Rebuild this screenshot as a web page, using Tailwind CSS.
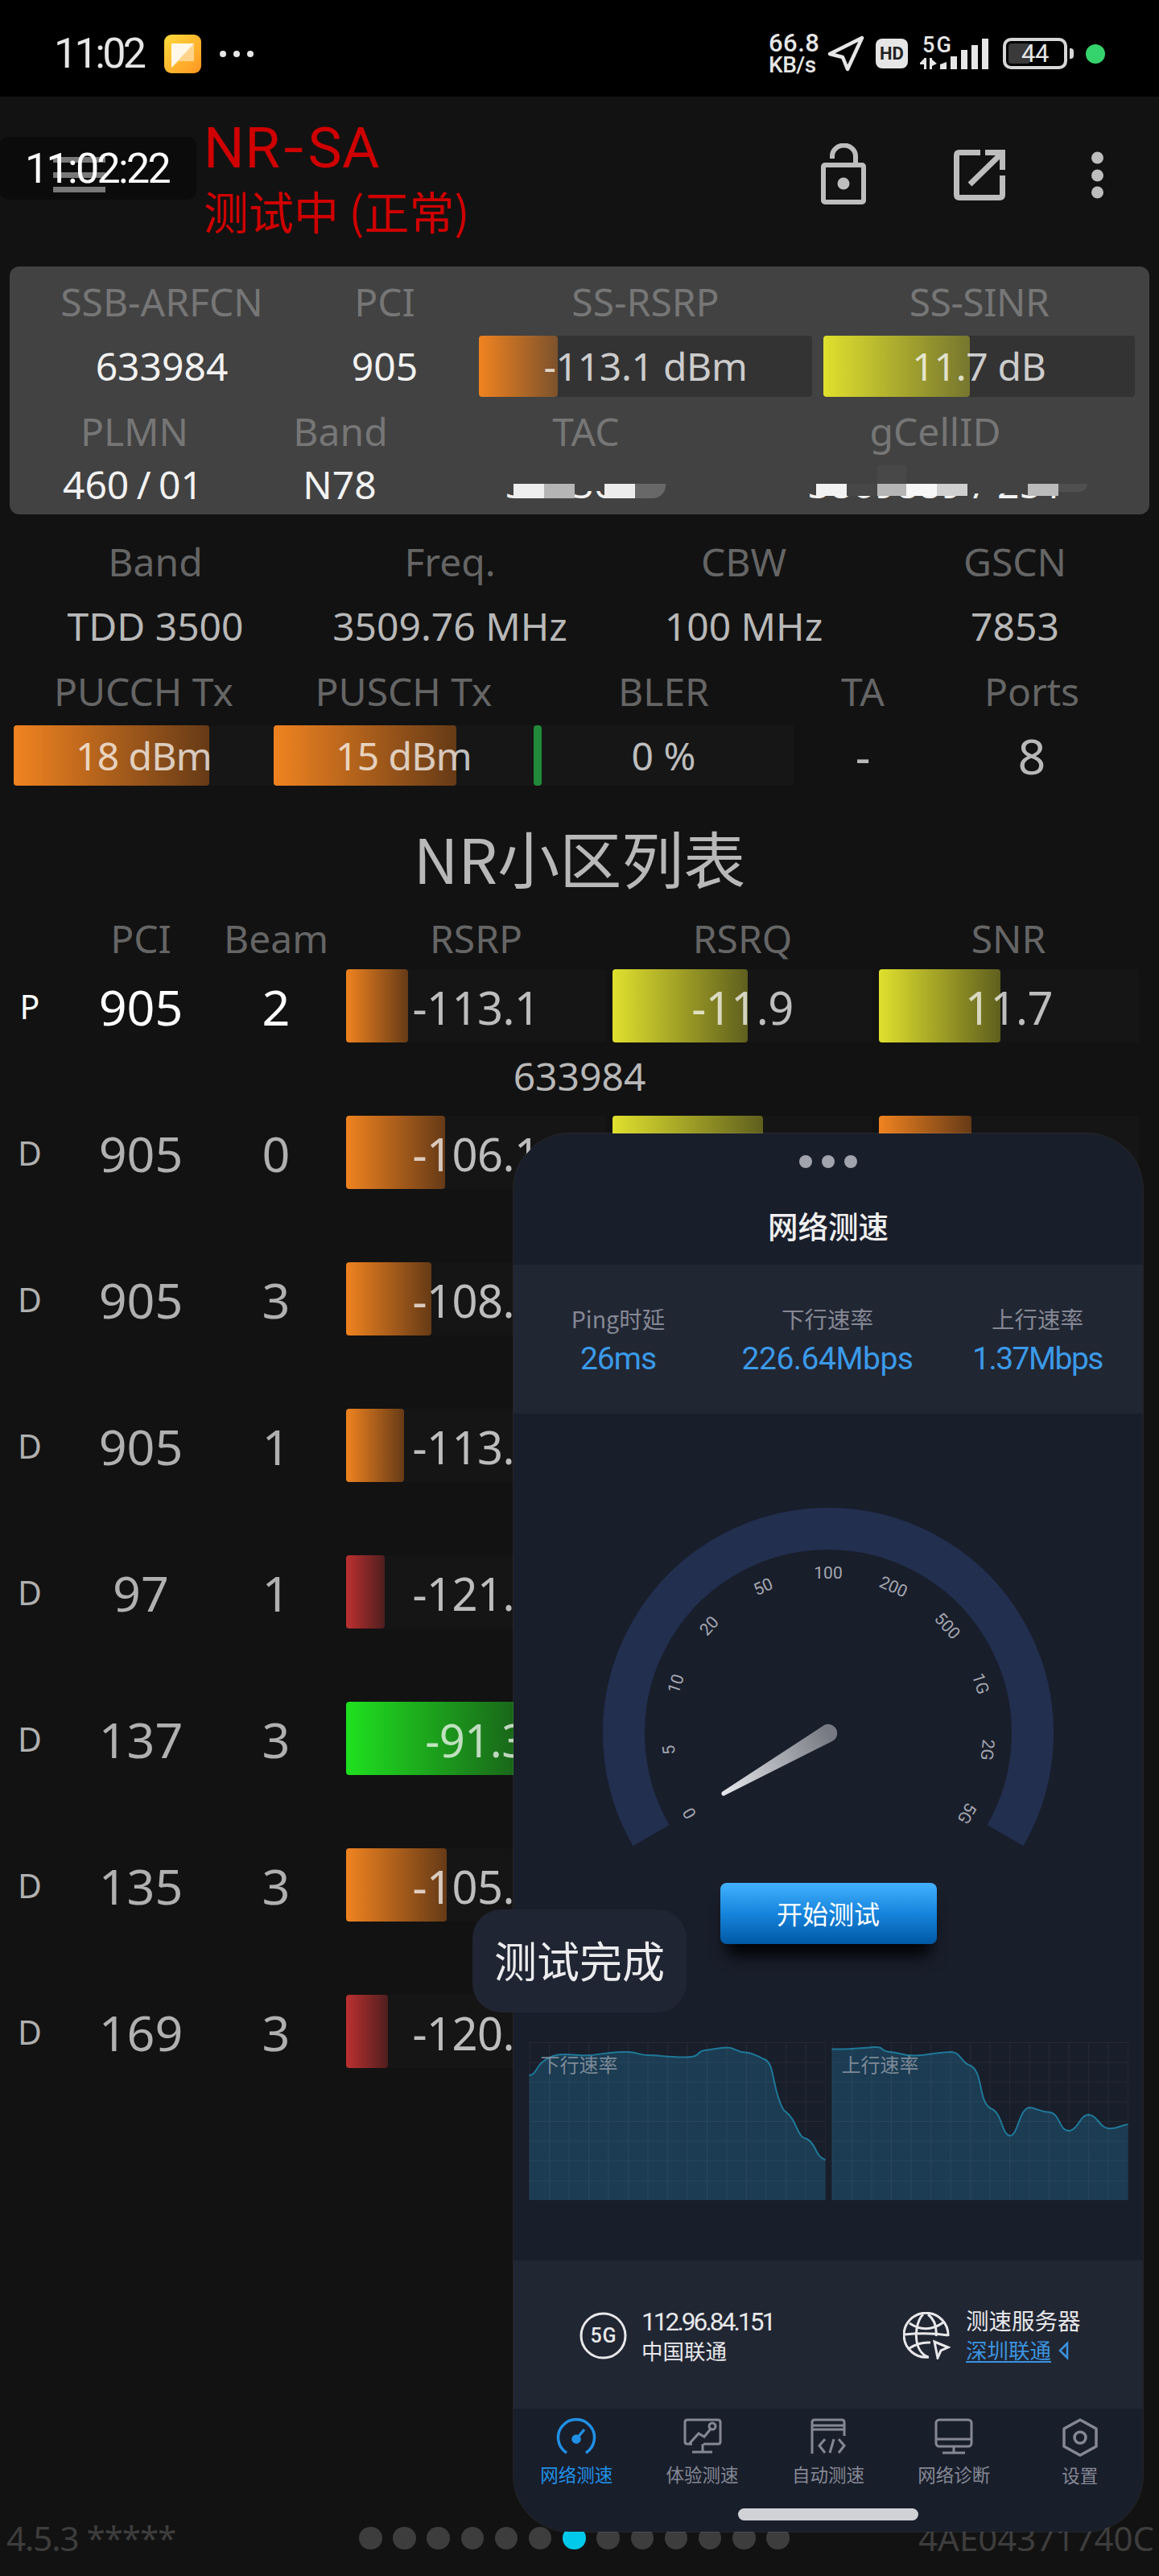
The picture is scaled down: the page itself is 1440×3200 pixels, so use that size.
<!DOCTYPE html>
<html lang="zh-CN">
<head>
  <meta charset="UTF-8">
  <meta name="viewport" content="width=device-width, initial-scale=1.0">
  <title>NR-SA</title>
  <script src="https://cdn.jsdelivr.net/npm/@tailwindcss/browser@4"></script>
</head>
<body class="bg-[#121212]">
  <div class="relative w-[1440px] h-[3200px] overflow-hidden bg-[#121212] flex flex-col font-['Noto_Sans','Noto_Sans_CJK_SC',sans-serif] text-[48px] leading-none text-[#b8b8b8] whitespace-nowrap">

    <!-- Status bar -->
    <div class="h-[120px] shrink-0 bg-black flex items-center pl-[67px] pr-[67px] pt-[13px] font-['Roboto',sans-serif] text-[#e6e6e6]">
      <span class="text-[52px] tracking-[-3.6px] w-[137px]">11:02</span>
      <svg class="w-[46px] h-[48px]" viewBox="0 0 46 48">
        <defs><linearGradient id="app" x1="0" y1="0" x2="1" y2="1"><stop offset="0" stop-color="#ffdb3c"/><stop offset="1" stop-color="#ff9522"/></linearGradient></defs>
        <rect width="46" height="48" rx="9" fill="url(#app)"/>
        <path d="M9 11H37V33H18L9 41Z" fill="#ffd48a"/>
        <path d="M9 11H37L9 41Z" fill="#fff8e8"/>
      </svg>
      <div class="flex gap-[9px] ml-[23px]">
        <i class="size-[8px] rounded-full bg-[#e6e6e6]"></i><i class="size-[8px] rounded-full bg-[#e6e6e6]"></i><i class="size-[8px] rounded-full bg-[#e6e6e6]"></i>
      </div>
      <div class="ml-auto flex items-center">
        <div class="w-[73px] text-[31px] leading-[27px] font-medium text-left"><div class="tracking-[0.5px]">66.8</div><div class="text-[28px] tracking-[-0.5px]">KB/s</div></div>
        <svg class="w-[46px] h-[46px]" viewBox="0 0 46 46" fill="none" stroke="#e6e6e6" stroke-width="4.5" stroke-linejoin="round"><path d="M43 3L3 23L19 27L25 42Z"/></svg>
        <div class="ml-[14px] w-[40px] h-[37px] rounded-[8px] bg-[#e6e6e6] flex items-center justify-center text-[22px] font-bold text-[#222]">HD</div>
        <svg class="ml-[15px] w-[85px] h-[46px]" viewBox="0 0 85 46" fill="#e6e6e6">
          <text x="3" y="21" font-size="27" font-weight="500" textLength="36">5G</text>
          <path d="M5 28V42H8V28ZM0 34L5 29V36H0ZM12 28V42H15V28ZM15 30L21 35L15 38Z"/>
          <path d="M25 42V36L33 33V42ZM38 26H46V42H38ZM51 18H59V42H51ZM64 12H72V42H64ZM77 4H85V42H77Z"/>
        </svg>
        <div class="ml-[18px] relative w-[80px] h-[39px] rounded-[10px] border-[4px] border-[#d6d6d6] flex items-center justify-center text-[31px] text-[#e6e6e6] tracking-[-0.5px]">
          <i class="absolute left-[3px] top-[3px] w-[27px] h-[25px] rounded-[4px] bg-[#3a3a3a]"></i><span class="relative">44</span>
        </div>
        <i class="ml-[3px] w-[5px] h-[13px] rounded-r-[4px] bg-[#d6d6d6]"></i>
        <i class="ml-[15px] size-[24px] rounded-full bg-[#35d36c]"></i>
      </div>
    </div>

    <!-- App bar -->
    <div class="h-[211px] shrink-0 flex pl-[253px] pr-[69px] relative">
      <div class="absolute left-[66px] top-[75px] w-[65px] h-[44px] flex flex-col justify-between">
        <i class="h-[7px] bg-[#b8b8b8]"></i><i class="h-[7px] bg-[#b8b8b8]"></i><i class="h-[7px] bg-[#b8b8b8]"></i>
      </div>
      <div class="absolute left-0 top-[50px] w-[244px] h-[78px] rounded-[10px] bg-black/35 pl-[31px] pt-[2px] flex items-center font-['Roboto',sans-serif] text-[52px] tracking-[-2.700px] text-white">11:02:22</div>
      <div class="text-[#d00000]">
        <div class="mt-[27px] h-[72px] flex items-center text-[71px] tracking-[0.500px] font-['Roboto',sans-serif]">NR<span class="w-[34px] text-center scale-x-125">-</span>SA</div>
        <div class="mt-[12px] h-[60px] flex items-center text-[56px] font-['Noto_Sans_CJK_SC',sans-serif]">测试中 (正常)</div>
      </div>
      <svg class="ml-auto mt-[58px] w-[56px] h-[76px]" viewBox="0 0 56 76" fill="none" stroke="#bdbdbd" stroke-width="6">
        <rect x="3" y="27" width="50" height="46" rx="2"/><path d="M14 19V16A14 13 0 0 1 43 16V27"/><circle cx="28" cy="50" r="7.5" fill="#bdbdbd" stroke="none"/>
      </svg>
      <svg class="ml-[109px] mt-[66px] w-[64px] h-[63px]" viewBox="0 0 64 63" fill="none" stroke="#bdbdbd" stroke-width="7">
        <path d="M33 3.500H7Q3.500 3.500 3.500 7V56Q3.500 59.500 7 59.500H57Q60.500 59.500 60.500 56V32M39 3.500H60.500V25M60 4L20 43"/>
      </svg>
      <svg class="ml-[107px] mt-[68px] w-[15px] h-[60px]" viewBox="0 0 15 60" fill="#bdbdbd"><circle cx="7.500" cy="8" r="7.500"/><circle cx="7.500" cy="30" r="7.500"/><circle cx="7.500" cy="51" r="7.500"/></svg>
    </div>

    <!-- Serving cell -->
    <div class="mx-[12px] h-[308px] shrink-0 rounded-[12px] bg-[#424242] text-[#f2f2f2]">
      <div class="flex h-[86px] items-center pt-[2px] text-center text-[#767676]">
        <div class="w-[378px]">SSB-ARFCN</div><div class="w-[176px]">PCI</div><div class="ml-[29px] w-[414px]">SS-RSRP</div><div class="ml-[14px] w-[387px] tracking-[-0.500px]">SS-SINR</div>
      </div>
      <div class="flex h-[76px] items-center text-center">
        <div class="w-[378px]">633984</div><div class="w-[176px]">905</div>
        <div class="ml-[29px] relative w-[414px] h-[76px] rounded-[4px] bg-[#333] flex items-center justify-center">
          <i class="absolute left-0 top-0 h-full w-[98px] rounded-[4px] bg-linear-to-r/srgb from-[#f08320] to-[#7d522c]"></i><span class="relative text-white/75 tracking-[-0.300px]">-113.1 dBm</span>
        </div>
        <div class="ml-[14px] relative w-[387px] h-[76px] rounded-[4px] bg-[#333] flex items-center justify-center">
          <i class="absolute left-0 top-0 h-full w-[182px] rounded-[4px] bg-linear-to-r/srgb from-[#e0e02e] to-[#76762f]"></i><span class="relative text-white/75 tracking-[-0.300px]">11.7 dB</span>
        </div>
      </div>
      <div class="flex h-[85px] items-center text-center text-[#767676]">
        <div class="w-[310px]">PLMN</div><div class="w-[202px]">Band</div><div class="w-[408px]">TAC</div><div class="w-[460px]">gCellID</div>
      </div>
      <div class="flex h-[47px] items-center text-center">
        <div class="w-[306px] [word-spacing:-3px]">460 / 01</div><div class="w-[208px]">N78</div>
        <!-- masked identifiers -->
        <div class="w-[408px] h-[47px] relative">
          <div class="absolute left-[102px] top-[32px] w-[220px] h-[24px] overflow-hidden text-left"><div class="-mt-[33px] leading-[47px]">3363636</div></div>
          <div class="absolute left-[112px] top-[23px] flex h-[18px]"><i class="w-[38px] bg-[#eeeeee]"></i><i class="w-[38px] bg-[#b5b5b5]"></i><i class="w-[37px]"></i><i class="w-[38px] bg-[#ececec]"></i><i class="w-[38px] bg-[#686868] rounded-br-[16px]"></i></div>
        </div>
        <div class="w-[480px] h-[47px] relative">
          <div class="absolute left-[70px] top-[35px] w-[320px] h-[24px] overflow-hidden text-left"><div class="-mt-[36px] leading-[47px]">3869889 / 251</div></div>
          <i class="absolute left-[156px] top-0 w-[36px] h-[23px] bg-[#484848]"></i>
          <div class="absolute left-[80px] top-[23px] flex h-[15px]"><i class="w-[38px] bg-[#f2f2f2]"></i><i class="w-[38px] bg-[#474747]"></i><i class="w-[36px] bg-[#b5b5b5]"></i><i class="w-[38px] bg-[#f7f7f7]"></i><i class="w-[38px] bg-[#d0d0d0]"></i><i class="w-[75px]"></i><i class="w-[38px] bg-[#bbbbbb]"></i><i class="w-[36px] h-[10px] bg-[#505050] rounded-br-[12px]"></i></div>
        </div>
      </div>
    </div>

    <!-- Carrier info -->
    <div class="mt-[19px] shrink-0 text-center">
      <div class="flex h-[79px] items-center pl-[12px] text-[#656565]"><div class="w-[362px]">Band</div><div class="w-[370px]">Freq.</div><div class="w-[360px]">CBW</div><div class="w-[314px]">GSCN</div></div>
      <div class="flex h-[81px] items-center pl-[12px]"><div class="w-[362px]">TDD 3500</div><div class="w-[370px]">3509.76 MHz</div><div class="w-[360px]">100 MHz</div><div class="w-[314px]">7853</div></div>
      <div class="flex h-[81px] items-center pl-[17px] text-[#656565]"><div class="w-[323px]">PUCCH Tx</div><div class="w-[323px]">PUSCH Tx</div><div class="w-[323px]">BLER</div><div class="w-[172px]">TA</div><div class="w-[248px]">Ports</div></div>
      <div class="mt-[2px] flex h-[75px] items-center pl-[17px]">
        <div class="relative w-[323px] h-full bg-[#161616] flex items-center justify-center"><i class="absolute left-0 top-0 h-full w-[243px] rounded-[4px] bg-linear-to-r/srgb from-[#f08320] to-[#663a16]"></i><span class="relative text-white/72 tracking-[-0.700px]">18 dBm</span></div>
        <div class="relative w-[323px] h-full bg-[#161616] flex items-center justify-center"><i class="absolute left-0 top-0 h-full w-[227px] rounded-[4px] bg-linear-to-r/srgb from-[#f08320] to-[#663a16]"></i><span class="relative text-white/72 tracking-[-0.700px]">15 dBm</span></div>
        <div class="relative w-[323px] h-full bg-[#161616] flex items-center justify-center"><i class="absolute left-0 top-0 h-full w-[10px] rounded-[4px] bg-[#218a3a]"></i><span class="relative text-white/72">0 %</span></div>
        <div class="w-[172px] text-[58px]">-</div><div class="w-[248px] text-[61px]">8</div>
      </div>
    </div>

    <h1 class="mt-[35px] h-[106px] shrink-0 flex items-center justify-center text-[77px] font-['Noto_Sans_CJK_SC',sans-serif]">NR小区列表</h1>

    <!-- Cell list -->
    <div class="mt-[16px] h-[65px] shrink-0 flex items-center text-center text-[#656565] pl-[74px]">
      <div class="w-[202px]">PCI</div><div class="w-[134px]">Beam</div><div class="ml-[20px] w-[323px]">RSRP</div><div class="ml-[8px] w-[323px]">RSRQ</div><div class="ml-[8px] w-[322px]">SNR</div>
    </div>
    <div id="cells" class="mt-[6px]"></div>

    <!-- Footer -->
    <div class="mt-auto h-[94px] shrink-0 flex items-center text-[42px] text-[#3d3d3d] relative">
      <span class="ml-[8px] w-[438px] tracking-[-1px]">4.5.3 *****</span>
      <div id="pages" class="flex gap-[13.700px]"></div>
      <span class="absolute right-[6px]">4AE04371740C</span>
    </div>

    <!-- Floating speed test window -->
    <div class="absolute left-[638px] top-[1408px] w-[782px] h-[1737px] rounded-[70px] overflow-hidden bg-[#191e2b] flex flex-col font-['Noto_Sans_CJK_SC',sans-serif] ring-1 ring-white/8">
      <div class="h-[163px] shrink-0 flex flex-col items-center">
        <div class="mt-[27px] flex gap-[12px]"><i class="size-[16px] rounded-full bg-[#a1a4ac]"></i><i class="size-[16px] rounded-full bg-[#a1a4ac]"></i><i class="size-[16px] rounded-full bg-[#a1a4ac]"></i></div>
        <div class="mt-[51px] text-[37.500px] leading-[40px] text-[#f0f0f0] font-medium">网络测速</div>
      </div>
      <div class="h-[185px] shrink-0 bg-[#212633] flex text-center text-[28.500px] text-[#858894] pt-[52px]">
        <div class="w-[260px] leading-[30px]">Ping时延<div class="mt-[12px] leading-[46px] text-[39px] tracking-[-1px] text-[#3b9ae8] font-['Roboto',sans-serif]">26ms</div></div>
        <div class="w-[260px] leading-[30px]">下行速率<div class="mt-[12px] leading-[46px] text-[39px] tracking-[-0.500px] text-[#3b9ae8] font-['Roboto',sans-serif]">226.64Mbps</div></div>
        <div class="w-[262px] leading-[30px]">上行速率<div class="mt-[12px] leading-[46px] text-[39px] tracking-[-1.500px] text-[#3b9ae8] font-['Roboto',sans-serif]">1.37Mbps</div></div>
      </div>
      <div class="flex flex-col items-center h-[1052px] shrink-0">
        <svg class="mt-[105px] w-[580px] h-[450px] shrink-0" viewBox="-290 -292 580 450">
          <defs><linearGradient id="needle" gradientUnits="userSpaceOnUse" x1="0" y1="0" x2="-131" y2="75"><stop offset="0" stop-color="#777a82"/><stop offset="1" stop-color="#e6e7ec"/></linearGradient></defs>
          <path d="M-220 127A254 254 0 1 1 220 127" fill="none" stroke="#222f4f" stroke-width="52"/>
          <g id="ticks" fill="#a4a7b0" font-size="21" text-anchor="middle" font-family="Roboto, sans-serif"></g>
          <path d="M-5 -10A11 11 0 1 1 5 10L-130 78Q-134 77 -132 73Z" fill="url(#needle)"/>
        </svg>
        <button class="mt-[28px] w-[269px] h-[76px] shrink-0 rounded-[8px] bg-linear-to-b/srgb from-[#42b2ff] via-[#1684dc] to-[#0059a5] text-white text-[32px] pb-[3px] shadow-[0_22px_20px_-8px_rgba(0,0,0,0.95)]">开始测试</button>
        <div class="mt-[122px] flex gap-[7px]">
          <svg class="w-[369px] h-[196px]" viewBox="0 0 368 196">
            <defs><pattern id="grid" width="24.500" height="24.500" patternUnits="userSpaceOnUse"><path d="M0 0V24.500M0 0H24.500" stroke="#ffffff" stroke-opacity="0.050" stroke-width="2"/></pattern></defs>
            <path d="M0 41C8 41 9 30 17 24S32 15 44 15S65 17 77 16S106 11 122 12S136 16 148 16S175 19 195 18.500S207 11 218 10S236 6.500 246 6.500S257 12 268 12.500S284 18 292 21C306 26 301 58 316 84C321 88 326 92 330 101C338 120 341 119 345 120C357 126 355 142 368 146V196H0Z" fill="#1b3c52"/>
            <path d="M0 41C8 41 9 30 17 24S32 15 44 15S65 17 77 16S106 11 122 12S136 16 148 16S175 19 195 18.500S207 11 218 10S236 6.500 246 6.500S257 12 268 12.500S284 18 292 21C306 26 301 58 316 84C321 88 326 92 330 101C338 120 341 119 345 120C357 126 355 142 368 146" fill="none" stroke="#1f7898" stroke-width="2"/>
            <rect width="368" height="196" fill="url(#grid)"/>
            <text x="14" y="37" font-size="24" fill="#8e98a5" fill-opacity="0.85">下行速率</text>
          </svg>
          <svg class="w-[369px] h-[196px]" viewBox="0 0 368 196">
            <path d="M0 8.500C18 9 38 7 52 6S59 11 72 12S89 17 104 16.500S124 13 148 12C160 12 160 24 170 28C189 34 181 72 197 82C212 87 211 115 221 116C232 116 232 82 246 81C256 82 259 87 271 87C284 89 282 110 295 110C307 108 308 90 319 90C331 91 332 106 344 107S357 103 368 102V196H0Z" fill="#1b3c52"/>
            <path d="M0 8.500C18 9 38 7 52 6S59 11 72 12S89 17 104 16.500S124 13 148 12C160 12 160 24 170 28C189 34 181 72 197 82C212 87 211 115 221 116C232 116 232 82 246 81C256 82 259 87 271 87C284 89 282 110 295 110C307 108 308 90 319 90C331 91 332 106 344 107S357 103 368 102" fill="none" stroke="#1f7898" stroke-width="2"/>
            <rect width="368" height="196" fill="url(#grid)"/>
            <text x="12" y="37" font-size="24" fill="#8e98a5" fill-opacity="0.85">上行速率</text>
          </svg>
        </div>
      </div>
      <div class="h-[184px] shrink-0 bg-[#212633] flex items-start pt-[59px] text-[#e8e8ea]">
        <svg class="ml-[82px] mt-[5px] w-[59px] h-[59px] shrink-0" viewBox="0 0 59 59"><circle cx="29.500" cy="29.500" r="27.500" fill="none" stroke="#e8e8ea" stroke-width="3"/><text x="29.500" y="38" text-anchor="middle" font-size="25" font-weight="500" textLength="32" fill="#e8e8ea" font-family="Roboto, sans-serif">5G</text></svg>
        <div class="ml-[18px] w-[325px]"><div class="leading-[36px] text-[31.500px] tracking-[-2.900px] font-['Roboto',sans-serif]">112.96.84.151</div><div class="mt-[1px] leading-[32px] text-[26.500px]">中国联通</div></div>
        <svg class="mt-[5px] w-[59px] h-[59px] shrink-0" viewBox="0 0 59 59" fill="none" stroke="#e8e8ea" stroke-width="3">
          <path d="M32 56A27.500 27.500 0 1 1 56 30M31 56C11 48 14 13 25 3M31 3C40 10 42 20 41 30M8 14Q29 28 50 13M2 28Q30 25 56 29M8 45Q20 37 34 38"/><path d="M39 37L56 44L47 48L43 57Z"/>
        </svg>
        <div class="ml-[19px]"><div class="-mt-[3px] leading-[36px] text-[28.500px]">测速服务器</div><div class="mt-[4px] flex items-center leading-[32px] text-[26.500px] text-[#3b93df]"><span class="border-b-2 border-[#3b93df] h-[31px] leading-[30px]">深圳联通</span><svg class="ml-[9px] w-[13px] h-[24px]" viewBox="0 0 13 24" fill="none" stroke="#3b93df" stroke-width="2.500"><path d="M11 3L2 12L11 21Z"/></svg></div></div>
      </div>
      <div class="flex pt-[11px] text-center text-[22.500px] leading-[28px] text-[#858894]">
        <div class="w-[156.400px] flex flex-col items-center text-[#2190e6]">
          <svg class="w-[50px] h-[50px]" viewBox="0 0 50 50" fill="none" stroke="currentColor" stroke-width="3.500"><path d="M13 44A22.500 22.500 0 1 1 37 44"/><circle cx="25" cy="27" r="4" fill="currentColor"/><path d="M25 27L35 15"/></svg>
          <div class="mt-[6px]">网络测速</div>
        </div>
        <div class="w-[156.400px] flex flex-col items-center">
          <svg class="w-[50px] h-[50px]" viewBox="0 0 50 50" fill="none" stroke="currentColor" stroke-width="3"><path d="M12 33H6Q3 33 3 30V6Q3 3 6 3H44Q47 3 47 6V30Q47 33 44 33H26M25 33V43M12 43H37M9 32L20 20L27 24L36 13"/><circle cx="37" cy="11" r="4"/></svg>
          <div class="mt-[6px]">体验测速</div>
        </div>
        <div class="w-[156.400px] flex flex-col items-center">
          <svg class="w-[50px] h-[50px]" viewBox="0 0 50 50" fill="none" stroke="currentColor" stroke-width="3"><path d="M5 45V6Q5 3 8 3H42Q45 3 45 6V23M5 10H45M5 15H45M21 27L14 35L21 44M38 27L45 35L38 44M32 27L27 44"/></svg>
          <div class="mt-[6px]">自动测速</div>
        </div>
        <div class="w-[156.400px] flex flex-col items-center">
          <svg class="w-[50px] h-[50px]" viewBox="0 0 50 50" fill="none" stroke="currentColor" stroke-width="3"><rect x="3" y="3" width="44" height="33" rx="4"/><path d="M3 27H47M25 36V44M11 44H39"/></svg>
          <div class="mt-[6px]">网络诊断</div>
        </div>
        <div class="w-[156.400px] flex flex-col items-center">
          <svg class="w-[50px] h-[50px]" viewBox="0 0 50 50" fill="none" stroke="currentColor" stroke-width="3.500"><path d="M25 3L45 14V36L25 47L5 36V14Z" stroke-linejoin="round"/><circle cx="25" cy="25" r="7"/></svg>
          <div class="mt-[7px]">设置</div>
        </div>
      </div>
      <div class="mt-auto mb-[14px] mx-auto w-[224px] h-[15px] shrink-0 rounded-full bg-[#d0d2d6]"></div>
    </div>

    <!-- Toast -->
    <div class="absolute left-[587px] top-[2372px] w-[266px] h-[128px] rounded-[36px] bg-[#202533] flex items-center justify-center pb-[3px] text-[53px] text-[#ececee] font-['Noto_Sans_CJK_SC',sans-serif]">测试完成</div>
  </div>

  <script>
    const fills = {
      orange: 'absolute left-0 top-0 h-full rounded-[4px] bg-linear-to-r/srgb from-[#f08320] to-[#663a16]',
      yellow: 'absolute left-0 top-0 h-full rounded-[4px] bg-linear-to-r/srgb from-[#e0e02e] to-[#5f5f1e]',
      green: 'absolute left-0 top-0 h-full rounded-[4px] bg-linear-to-r/srgb from-[#1fe01f] to-[#196019]',
      red: 'absolute left-0 top-0 h-full rounded-[4px] bg-linear-to-r/srgb from-[#bd3030] to-[#4f1e1e]'
    };

    // type, pci, beam, then [value, fill width, colour] for each bar
    const cells = [
      ['P', 905, 2, [['-113.1', 77, 'orange'], ['-11.9', 168, 'yellow'], ['11.7', 151, 'yellow']], '633984'],
      ['D', 905, 0, [['-106.1', 123, 'orange'], ['', 187, 'yellow'], ['', 115, 'orange']]],
      ['D', 905, 3, [['-108.7', 106, 'orange']]],
      ['D', 905, 1, [['-113.8', 72, 'orange']]],
      ['D', 97, 1, [['-121.0', 48, 'red']]],
      ['D', 137, 3, [['-91.3', 220, 'green']]],
      ['D', 135, 3, [['-105.9', 125, 'orange']]],
      ['D', 169, 3, [['-120.4', 52, 'red']]]
    ];

    const bar = ([value, width, color]) => `
      <div class="relative w-[323px] h-[91px] bg-[#151515] flex items-center justify-center">
        <i class="${fills[color]}" style="width:${width}px"></i>
        <span class="relative pt-[2px] text-[56px] tracking-[-0.500px] text-white/72">${value}</span>
      </div>`;

    document.getElementById('cells').innerHTML = cells.map(([type, pci, beam, bars, arfcn]) => `
      <div class="h-[182px]">
        <div class="flex items-center text-center h-[91px] text-[61px] ${type === 'P' ? 'text-white' : 'text-[#b0b0b0]'}">
          <div class="w-[74px] pt-[2px] text-[41px]">${type}</div>
          <div class="w-[202px] pt-[2px]">${pci}</div>
          <div class="w-[134px] pt-[2px]">${beam}</div>
          <div class="ml-[20px] flex gap-[8px]">${bars.map(bar).join('')}</div>
        </div>
        <div class="h-[83px] flex items-center justify-center">${arfcn || ''}</div>
      </div>`).join('');

    document.getElementById('pages').innerHTML = Array.from({ length: 13 }, (_, i) =>
      `<i class="size-[28.500px] rounded-full ${i === 6 ? 'bg-[#00c9e9]' : 'bg-[#3d3d3d]'}"></i>`).join('');

    document.getElementById('ticks').innerHTML = ['0', '5', '10', '20', '50', '100', '200', '500', '1G', '2G', '5G'].map((t, i) =>
      `<text y="-192" transform="rotate(${-120 + i * 24})">${t}</text>`).join('');
  </script>
</body>
</html>
